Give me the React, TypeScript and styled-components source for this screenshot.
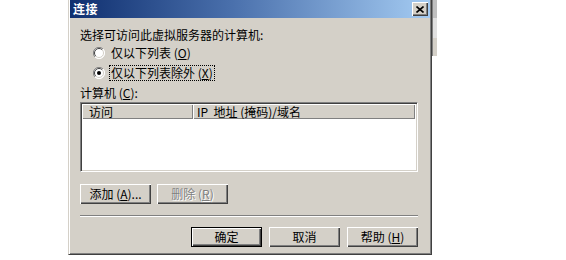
import React from 'react';
import styled, { createGlobalStyle, css } from 'styled-components';

const GlobalStyle = createGlobalStyle`
  html, body {
    margin: 0;
    padding: 0;
    background: #ffffff;
  }
  body {
    font-family: "Noto Sans CJK SC", "DejaVu Sans", sans-serif;
    font-size: 12px;
    color: #000000;
  }
`;

const Page = styled.div`
  display: flex;
  align-items: flex-start;
  padding-left: 68px;
`;

const Dialog = styled.div`
  width: 364px;
  height: 255px;
  box-sizing: border-box;
  background: #d4d0c8;
  border: 1px solid;
  border-top: none;
  border-color: #d4d0c8 #404040 #404040 #d4d0c8;
  box-shadow: inset 1px 0 #ffffff, inset -1px -1px #808080;
  padding: 0 1px 1px 1px;
  display: flex;
  flex-direction: column;
`;

const BehindStrip = styled.div`
  width: 4px;
  height: 56px;
  background: #d4d0c8;
  border-left: 1px solid #808080;
  box-shadow: inset 0 18px #c0c0c0, inset 0 38px #e0e0e0;
`;

const TitleBar = styled.div`
  height: 18px;
  display: flex;
  align-items: center;
  justify-content: space-between;
  padding: 0 2px 0 3px;
  background: linear-gradient(90deg, #0f2f6f 0%, #4a70ac 45%, #a4cbf2 100%);
`;

const TitleText = styled.span`
  color: #ffffff;
  font-weight: 700;
  font-size: 12px;
  line-height: 18px;
  letter-spacing: 0.5px;
`;

const CloseButton = styled.button`
  width: 16px;
  height: 14px;
  padding: 0;
  margin: 0;
  display: flex;
  align-items: center;
  justify-content: center;
  background: #d4d0c8;
  border: none;
  box-shadow: inset 1px 1px #ffffff, inset -1px -1px #404040, inset -2px -2px #808080;
`;

const Body = styled.div`
  flex: 1;
  display: flex;
  flex-direction: column;
  padding: 10px 12px 0 10px;
`;

const Label = styled.div<{ $top?: number }>`
  height: 14px;
  line-height: 14px;
  margin-top: ${p => p.$top ?? 0}px;
  white-space: nowrap;
`;

const RadioRow = styled.label<{ $top: number }>`
  display: flex;
  align-items: center;
  gap: 5px;
  height: 14px;
  margin-top: ${p => p.$top}px;
  padding-left: 13px;
  white-space: nowrap;
`;

const RadioText = styled.span<{ $focused?: boolean }>`
  line-height: 14px;
  padding: 0 1px;
  ${p =>
    p.$focused &&
    css`
      outline: 1px dotted #000000;
      outline-offset: 0;
    `}
`;

const ListBox = styled.div`
  height: 70px;
  margin-top: 2px;
  box-sizing: border-box;
  background: #ffffff;
  border: 1px solid;
  border-color: #808080 #ffffff #ffffff #808080;
  box-shadow: inset 1px 1px #404040, inset -1px -1px #d4d0c8;
  padding: 1px 2px 0 1px;
`;

const HeaderRow = styled.div`
  display: flex;
  height: 15px;
`;

const HeaderCell = styled.div<{ $width?: number; $indent: number }>`
  ${p => (p.$width ? `width: ${p.$width}px;` : 'flex: 1;')}
  box-sizing: border-box;
  height: 15px;
  line-height: 15px;
  padding-left: ${p => p.$indent}px;
  background: #d4d0c8;
  box-shadow: inset 1px 1px #ffffff, inset -1px -1px #808080;
  white-space: pre;
  overflow: hidden;
`;

const ButtonRow = styled.div<{ $top: number; $end?: boolean }>`
  display: flex;
  gap: ${p => (p.$end ? 7 : 6)}px;
  justify-content: ${p => (p.$end ? 'flex-end' : 'flex-start')};
  margin-top: ${p => p.$top}px;
`;

const Button = styled.button<{ $default?: boolean }>`
  width: 71px;
  height: 20px;
  padding: 0;
  margin: 0;
  font-family: inherit;
  font-size: 12px;
  line-height: 18px;
  color: #000000;
  background: #d4d0c8;
  border: none;
  box-shadow: inset 1px 1px #ffffff, inset -1px -1px #404040, inset -2px -2px #808080;
  white-space: nowrap;
  ${p =>
    p.$default &&
    css`
      box-shadow: inset 0 0 0 1px #000000, inset 2px 2px #ffffff, inset -2px -2px #404040,
        inset -3px -3px #808080;
    `}
  &:disabled {
    color: #808080;
    text-shadow: 1px 1px #ffffff;
  }
`;

const Separator = styled.div`
  height: 2px;
  margin-top: 11px;
  border-top: 1px solid #808080;
  border-bottom: 1px solid #ffffff;
  box-sizing: border-box;
`;

const Radio: React.FC<{ checked?: boolean }> = ({ checked }) => (
  <svg width="12" height="12" viewBox="0 0 12 12">
    <circle cx="6" cy="6" r="5.5" fill="#ffffff" />
    <path d="M10 2 A5.5 5.5 0 0 0 2 10" stroke="#808080" strokeWidth="1" fill="none" />
    <path d="M9.2 2.8 A4.5 4.5 0 0 0 2.8 9.2" stroke="#404040" strokeWidth="1" fill="none" />
    <path d="M2 10 A5.5 5.5 0 0 0 10 2" stroke="#ffffff" strokeWidth="1" fill="none" />
    <path d="M2.8 9.2 A4.5 4.5 0 0 0 9.2 2.8" stroke="#d4d0c8" strokeWidth="1" fill="none" />
    {checked && <circle cx="6" cy="6" r="2" fill="#000000" />}
  </svg>
);

export default function App() {
  return (
    <>
      <GlobalStyle />
      <Page>
        <Dialog>
          <TitleBar>
            <TitleText>连接</TitleText>
            <CloseButton aria-label="close">
              <svg width="8" height="7" viewBox="0 0 8 7">
                <path d="M0.5 0.5 L7.5 6.5 M7.5 0.5 L0.5 6.5" stroke="#000000" strokeWidth="1.6" />
              </svg>
            </CloseButton>
          </TitleBar>
          <Body>
            <Label>选择可访问此虚拟服务器的计算机:</Label>
            <RadioRow $top={4}>
              <Radio />
              <RadioText>
                仅以下列表 (<u>O</u>)
              </RadioText>
            </RadioRow>
            <RadioRow $top={6}>
              <Radio checked />
              <RadioText $focused>
                仅以下列表除外 (<u>X</u>)
              </RadioText>
            </RadioRow>
            <Label $top={6}>
              计算机 (<u>C</u>):
            </Label>
            <ListBox>
              <HeaderRow>
                <HeaderCell $width={111} $indent={7}>访问</HeaderCell>
                <HeaderCell $indent={4}>IP  地址 (掩码)/域名</HeaderCell>
              </HeaderRow>
            </ListBox>
            <ButtonRow $top={12}>
              <Button>
                添加 (<u>A</u>)...
              </Button>
              <Button disabled>
                删除 (<u>R</u>)
              </Button>
            </ButtonRow>
            <Separator />
            <ButtonRow $top={10} $end>
              <Button $default>确定</Button>
              <Button>取消</Button>
              <Button>
                帮助 (<u>H</u>)
              </Button>
            </ButtonRow>
          </Body>
        </Dialog>
        <BehindStrip />
      </Page>
    </>
  );
}
